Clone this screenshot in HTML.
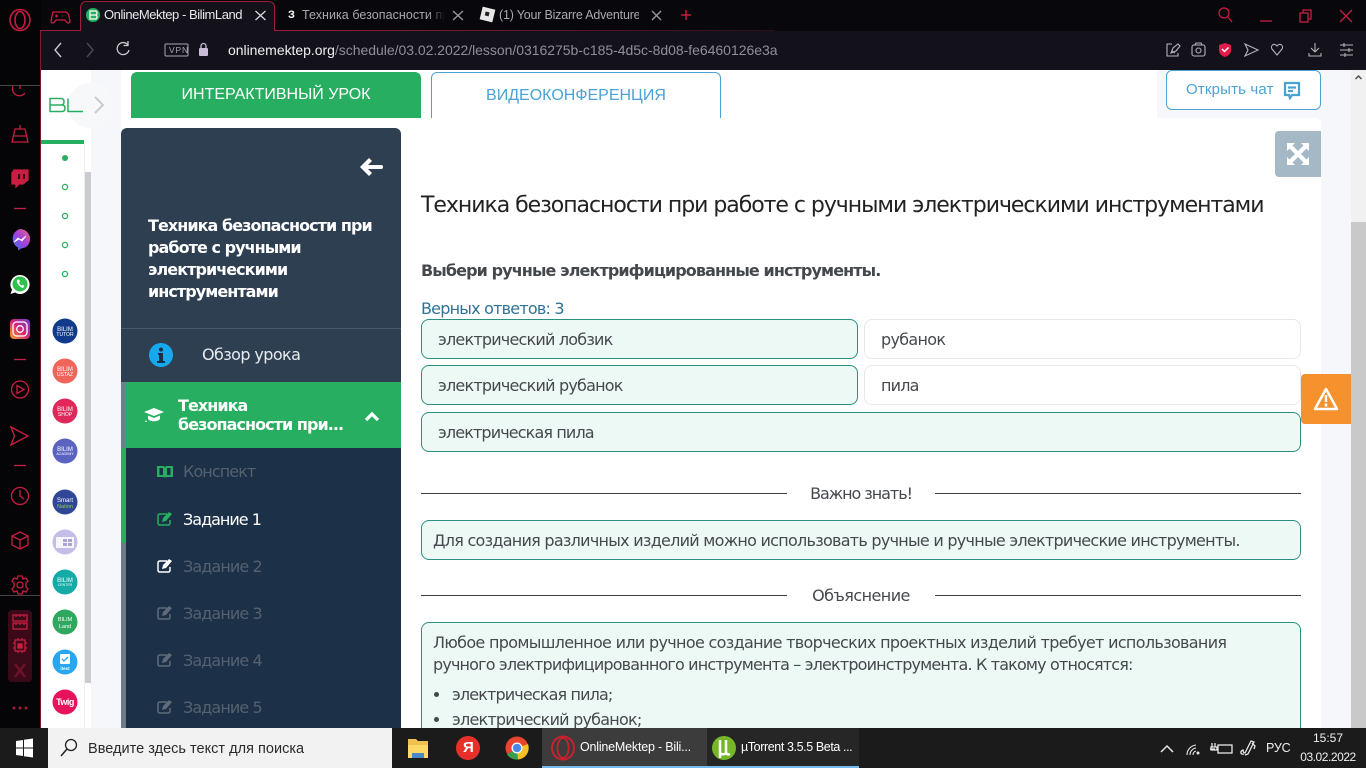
<!DOCTYPE html>
<html lang="ru"><head><meta charset="utf-8"><title>OnlineMektep - BilimLand</title>
<style>
html,body{margin:0;padding:0;width:1366px;height:768px;overflow:hidden;background:#fff}
body{position:relative;font-family:"DejaVu Sans","Liberation Sans",sans-serif;color:#45484d}
.a{position:absolute}
.t{position:absolute;white-space:nowrap;line-height:24px;height:24px;font-size:16px;letter-spacing:-.75px;color:#45484d}
.l{font-family:"Liberation Sans",sans-serif;letter-spacing:0}
.op{position:absolute;box-sizing:border-box;height:40px;border-radius:8px;border:1px solid #2b9080;background:#edf9f5}
.wo{border:1px solid #e6e8ea;background:#fff}
.ln{position:absolute;height:1px;background:#3c4043}
svg{position:absolute;overflow:visible}
</style></head><body>

<!-- browser chrome -->
<div class="a" style="left:0;top:0;width:1366px;height:31px;background:#08070c"></div>
<div class="a" style="left:41px;top:31px;width:1325px;height:39px;background:#13121a"></div>
<div class="a" style="left:0;top:0;width:41px;height:728px;background:#050508"></div>
<div class="a" style="left:40px;top:30px;width:1px;height:698px;background:#7d1a30"></div>
<div class="a" style="left:80px;top:1px;width:195px;height:30px;box-sizing:border-box;border:1px solid #a01d3c;border-bottom:0;border-radius:6px 6px 0 0;background:#13121a"></div>
<div class="a" style="left:275px;top:30px;width:500px;height:1px;background:linear-gradient(90deg,#a01d3c,#2a1018)"></div>
<div class="a" style="left:40px;top:30px;width:41px;height:1px;background:#a01d3c"></div>

<svg style="left:0;top:0" width="1366" height="70" fill="none" stroke="#c81e41" stroke-width="1.3">
 <ellipse cx="20" cy="20" rx="10" ry="10.5" stroke-width="1.5"/><ellipse cx="20" cy="20" rx="5" ry="8.5" stroke-width="1.5"/>
 <path d="M53 12h12q3 0 4 4l1 5q0 2-2 2-1 0-3-3h-9q-2 3-3 3-2 0-2-2l1-5q1-4 1-4z"/><path d="M55 16h3M56.500 14.500v3M62 16h1"/>
 <circle cx="93" cy="15" r="7" fill="#27ae60" stroke="none"/><path d="M90 11h5.500q1.500 0 1.500 2t-1.500 2H90zM90 15h5.500q1.500 0 1.500 2t-1.500 2H90z" stroke="#fff" stroke-width="1.200"/>
 <path d="M255.500 11l10 9M265.500 11l-10 9" stroke="#d8d8dc"/>
 <path d="M453 11l10 9M463 11l-10 9" stroke="#9a9aa0"/>
 <path d="M652 11l9 9M661 11l-9 9" stroke="#9a9aa0"/>
 <path d="M681 15h10M686 10v10" stroke="#d82345"/>
 <circle cx="1224" cy="13" r="5"/><path d="M1228 17l4 5"/>
 <path d="M1260 21h12" />
 <rect x="1300" y="13" width="8" height="9"/><path d="M1303 13v-3h8v9h-3"/>
 <path d="M1340 10l12 12M1352 10l-12 12"/>
 <g stroke="#c8c8cc" stroke-width="1.400"><path d="M61 43l-6 7 6 7"/></g>
 <path d="M87 43l6 7-6 7" stroke="#4a4a50" stroke-width="1.400"/>
 <path d="M128 45a6 6 0 1 0 1 5M128 41v4.500h-4.500" stroke="#c8c8cc" stroke-width="1.300"/>
 <rect x="165" y="44" width="23" height="12" rx="1" stroke="#a8a8ae" stroke-width="1"/>
 <rect x="199" y="48" width="9" height="8" rx="1" fill="#c8bcd8" stroke="none"/><path d="M201 48v-2a2.500 2.500 0 0 1 5 0v2" stroke="#c8bcd8"/>
 <g stroke="#b4b4ba" stroke-width="1.100">
 <path d="M1172 44h-5v12h11v-3M1171 53l2-5 5-4 2 2-4 5zM1172 51l3 2"/>
 <rect x="1192" y="45" width="13" height="11" rx="2"/><circle cx="1198.500" cy="50.500" r="2.500"/><path d="M1195 45l1-2h5l1 2"/>
 <path d="M1245 44l13 6-13 6 3-6z"/>
 <path d="M1277 46c-3-4-7 0-5 3l5 6 5-6c2-3-2-7-5-3z"/>
 <path d="M1315 43v9M1311 48l4 4 4-4M1309 53v3h12v-3"/>
 <path d="M1340 45h13M1340 50h13M1340 55h13M1344 43v4M1349 48v4M1345 53v4"/>
 </g>
 <path d="M1225 43l6 2v5c0 4-3 6-6 7-3-1-6-3-6-7v-5z" fill="#e8194b" stroke="none"/><path d="M1222 49l2.500 2.500 4-4" stroke="#fff" stroke-width="1.500"/>
</svg>
<div class="t l" style="left:104px;top:3px;font-size:13px;color:#e8e8ea;letter-spacing:-.45px">OnlineMektep - BilimLand</div>
<div class="a l" style="left:288px;top:9px;font:bold 11px 'Liberation Sans',sans-serif;color:#fff">З</div>
<div class="t l" style="left:302px;top:3px;width:143px;overflow:hidden;font-size:12.500px;color:#a8a8ae;letter-spacing:.05px;-webkit-mask-image:linear-gradient(90deg,#000 88%,transparent)">Техника безопасности при работе</div>
<div class="a" style="left:481px;top:8px;width:13px;height:13px;background:#e8e8e8;transform:rotate(14deg)"><div class="a" style="left:4px;top:4px;width:4px;height:4px;background:#222"></div></div>
<div class="t l" style="left:499px;top:3px;width:140px;overflow:hidden;font-size:12.500px;color:#a8a8ae;letter-spacing:-.2px">(1) Your Bizarre Adventure</div>
<div class="t l" style="left:169px;top:45px;height:10px;line-height:10px;font-size:8.500px;color:#a8a8ae;letter-spacing:.8px">VPN</div>
<div class="t l" style="left:228px;top:38px;font-size:14px;color:#8f8f96;letter-spacing:-.03px"><span style="color:#f0f0f2">onlinemektep.org</span>/schedule/03.02.2022/lesson/0316275b-c185-4d5c-8d08-fe6460126e3a</div>

<!-- opera sidebar icons -->
<svg style="left:0;top:70px" width="41" height="658" fill="none" stroke="#c81e41" stroke-width="1.300">
 <path d="M0 15.500h40" stroke="#4a4448" stroke-width="1"/>
 <path d="M13 16a7 7 0 0 0 12 7"/><path d="M20 15v4" />
 <path d="M20 55v4M15 59h10l3 13H12zM14 66h12"/>
 <path d="M14 100h14v10l-5 4h-4l-3 3v-3h-4v-11z" fill="#c81e41"/><path d="M19 104v5M24 104v5" stroke="#050508" stroke-width="1.500"/>
 <path d="M14 138.500h12" />
 <path d="M14 289.500h12"/>
 <circle cx="20" cy="319.500" r="8.500"/><path d="M17 315.500l7 4-7 4z"/>
 <path d="M11 357l17 9-17 9 3.500-9z"/>
 <path d="M14 395.500h12"/>
 <circle cx="20" cy="426" r="8.500"/><path d="M20 420v6l4 3"/>
 <path d="M20 462l8 4v9l-8 4-8-4v-9zM12 466l8 4 8-4M20 470v9"/>
 <circle cx="20" cy="515" r="3"/><path d="M18 506h4l1 3 3-1 2 3-2 2v4l2 2-2 3-3-1-1 3h-4l-1-3-3 1-2-3 2-2v-4l-2-2 2-3 3 1z"/>
 <path d="M0 525.500h40" stroke="#4a4448" stroke-width="1"/>
 <rect x="8" y="540" width="24" height="72" rx="4" fill="#3b0a19" stroke="none"/>
 <rect x="13" y="545" width="14" height="6"/><rect x="13" y="553" width="14" height="6"/><path d="M16 545v2M20 545v2M24 545v2M16 553v2M20 553v2M24 553v2"/>
 <rect x="15" y="570" width="10" height="11"/><rect x="18" y="574" width="4" height="4" fill="#c81e41"/><path d="M13 573h2M13 578h2M25 573h2M25 578h2M18 568v2M22 568v2M18 581v2M22 581v2"/>
 <path d="M15 594l10 13M25 594l-10 13" stroke="#6d1228" stroke-width="2.500"/>
 <circle cx="14" cy="638" r="1.500" fill="#a01d3c" stroke="none"/><circle cx="20" cy="638" r="1.500" fill="#a01d3c" stroke="none"/><circle cx="26" cy="638" r="1.500" fill="#a01d3c" stroke="none"/>
 <defs>
  <linearGradient id="ms" x1="0" y1="1" x2="1" y2="0"><stop offset="0" stop-color="#2e7bf0"/><stop offset=".5" stop-color="#a040e0"/><stop offset="1" stop-color="#f0607a"/></linearGradient>
  <linearGradient id="ig" x1="0" y1="1" x2="1" y2="0"><stop offset="0" stop-color="#f5a623"/><stop offset=".5" stop-color="#d6247a"/><stop offset="1" stop-color="#6a40d0"/></linearGradient>
 </defs>
 <path d="M20 159a10 10 0 0 1 6 18l-1 .500-4 1-3 2v-3a10 10 0 0 1 2-18.500z" fill="url(#ms)" stroke="none"/><path d="M14 172l4-4 3 2 5-4-4 5-3-2z" fill="#fff" stroke="#fff" stroke-width=".8"/>
 <path d="M20 205a9.500 9.500 0 1 1-5 17.500l-4.500 1.500 1.500-4.300A9.500 9.500 0 0 1 20 205z" fill="#fff" stroke="none"/><circle cx="20" cy="214" r="7.500" fill="#2ec04a" stroke="none"/><path d="M17 210c-1 2 2 7 6 8l1.500-2-2-1.300-1 .8c-1-.5-2-2-2.500-3l1-1-1-2z" fill="#fff" stroke="none"/>
 <rect x="10" y="249" width="20" height="20" rx="4" fill="url(#ig)" stroke="none"/><rect x="13" y="252" width="14" height="14" rx="3.500" stroke="#fff" stroke-width="1.300"/><circle cx="20" cy="259" r="3.300" stroke="#fff" stroke-width="1.300"/>
</svg>

<!-- page bg -->
<div class="a" style="left:91px;top:70px;width:30px;height:658px;background:#f5f7fb"></div>
<div class="a" style="left:1157px;top:70px;width:194px;height:658px;background:#f5f7fb"></div>
<div class="a" style="left:1351px;top:70px;width:15px;height:658px;background:#f1f1f1"></div>
<div class="a" style="left:1351px;top:222px;width:15px;height:506px;background:#c9c9c9"></div>
<svg style="left:1351px;top:70px" width="15" height="15" fill="none" stroke="#505050" stroke-width="1.500"><path d="M4.500 9l3-3 3 3"/></svg>

<!-- left BL panel -->
<div class="a" style="left:68px;top:83px;width:46px;height:45px;border-radius:23px;background:#f7f8fa"></div>
<svg style="left:41px;top:70px" width="80" height="70" fill="none" stroke="#27ae60" stroke-width="1.500">
 <path d="M9 28.500h11q3 0 3 3.200t-3 3.300H9zM9 35h12q3 0 3 3.200t-3 3.300H9zM27 28.500v13h15"/>
 <path d="M54 27l8 8-8 8" stroke="#c8ccd4" stroke-width="2"/>
</svg>
<div class="a" style="left:41px;top:140px;width:43px;height:4px;background:#27ae60"></div>
<div class="a" style="left:84px;top:144px;width:1px;height:584px;background:#eceef0"></div>
<div class="a" style="left:85px;top:172px;width:6px;height:511px;background:#c9cbd0"></div>
<svg style="left:41px;top:140px" width="50" height="590" fill="none" stroke="#27ae60" stroke-width="1.300" font-family="Liberation Sans, sans-serif">
 <circle cx="24" cy="18" r="3" fill="#27ae60" stroke="none"/>
 <circle cx="24" cy="47" r="2.600"/><circle cx="24" cy="76" r="2.600"/><circle cx="24" cy="105" r="2.600"/><circle cx="24" cy="134" r="2.600"/>
 <g stroke="none" text-anchor="middle" fill="#fff">
 <circle cx="24" cy="191" r="12.500" fill="#123a8c"/><text x="24" y="191" font-size="6">BILIM</text><text x="24" y="196" font-size="5">TUTOR</text>
 <circle cx="24" cy="231" r="12.500" fill="#f0645a"/><text x="24" y="231" font-size="6">BILIM</text><text x="24" y="236" font-size="5">USTAZ</text>
 <circle cx="24" cy="271" r="12.500" fill="#e0295a"/><text x="24" y="271" font-size="6">BILIM</text><text x="24" y="276" font-size="5">SHOP</text>
 <circle cx="24" cy="311" r="12.500" fill="#5a64c0"/><text x="24" y="311" font-size="6">BILIM</text><text x="24" y="315" font-size="3.500">ACADEMY</text>
 <circle cx="24" cy="362" r="12.500" fill="#2f4796"/><text x="24" y="362" font-size="6">Smart</text><text x="24" y="368" font-size="5.500" fill="#8fd04a">Nation</text>
 <circle cx="24" cy="402" r="12.500" fill="#c2bee8"/><rect x="15" y="397" width="18" height="11" fill="#fff" opacity=".85"/><rect x="22" y="399" width="4" height="3" fill="#a8a4d4"/><rect x="27" y="399" width="4" height="3" fill="#a8a4d4"/><rect x="22" y="403" width="4" height="3" fill="#a8a4d4"/><rect x="27" y="403" width="4" height="3" fill="#a8a4d4"/>
 <circle cx="24" cy="442" r="12.500" fill="#14aaa5"/><text x="24" y="442" font-size="6">BILIM</text><text x="24" y="446" font-size="3.500">CENTER</text>
 <circle cx="24" cy="482" r="12.500" fill="#2ea85f"/><text x="24" y="481" font-size="5.500">BILIM</text><text x="24" y="488" font-size="5.500">Land</text>
 <circle cx="24" cy="522" r="12.500" fill="#28a6f0"/><rect x="19" y="514" width="10" height="10" rx="1" fill="#fff"/><path d="M21 519l2 2 4-4" stroke="#28a6f0" stroke-width="1.300" fill="none"/><text x="24" y="530" font-size="4.500" font-weight="bold">itest</text>
 <circle cx="24" cy="562" r="12.500" fill="#e6125c"/><text x="24" y="565" font-size="9" font-weight="bold" letter-spacing="-.5">Twig</text>
 </g>
</svg>

<!-- top tabs -->
<div class="a" style="left:131px;top:72px;width:290px;height:46px;background:#27ae60;border-radius:6px 6px 0 0"></div>
<div class="t l" style="left:131px;width:290px;text-align:center;top:83px;font-size:16px;color:#fff">ИНТЕРАКТИВНЫЙ УРОК</div>
<div class="a" style="left:431px;top:72px;width:290px;height:46px;box-sizing:border-box;border:1px solid #4aa3d3;border-bottom:0;border-radius:6px 6px 0 0;background:#fff"></div>
<div class="t l" style="left:431px;width:290px;text-align:center;top:84px;font-size:16px;color:#4aa3d3">ВИДЕОКОНФЕРЕНЦИЯ</div>
<div class="a" style="left:1166px;top:70px;width:155px;height:40px;box-sizing:border-box;border:1px solid #4aa3d3;border-radius:6px;background:#fff"></div>
<div class="t l" style="left:1186px;top:78px;font-size:15px;color:#4aa3d3;letter-spacing:.17px">Открыть чат</div>
<svg style="left:1283px;top:81px" width="18" height="20" fill="none" stroke="#4aa3d3" stroke-width="2.300"><path d="M2 2h14v12H9l-2 3-1-3H2zM5 6.500h8M5 10h5"/></svg>

<!-- main card -->
<div class="a" style="left:121px;top:118px;width:1200px;height:610px;background:#fff;border-radius:6px 6px 0 0"></div>
<div class="a" style="left:1275px;top:131px;width:46px;height:46px;background:#a5b8c6;border-radius:4px 0 0 4px"></div>
<svg style="left:1286px;top:142px" width="24" height="24" fill="#fff"><path d="M1 1h8l-2.500 2.500L12 9l5.500-5.500L15 1h8v8l-2.500-2.500L15 12l5.500 5.500L23 15v8h-8l2.500-2.500L12 15l-5.500 5.500L9 23H1v-8l2.500 2.500L9 12 3.500 6.500 1 9z"/></svg>

<!-- dark sidebar -->
<div class="a" style="left:121px;top:128px;width:280px;height:254px;background:#2f3f52;border-radius:6px 6px 0 0"></div>
<div class="a" style="left:121px;top:328px;width:280px;height:1px;background:#4a5a6c"></div>
<div class="a" style="left:121px;top:382px;width:5px;height:66px;background:#6f7e8d"></div>
<div class="a" style="left:126px;top:382px;width:275px;height:66px;background:#27ae60"></div>
<div class="a" style="left:121px;top:448px;width:280px;height:280px;background:#1c3048"></div>
<div class="a" style="left:121px;top:448px;width:5px;height:95px;background:#27ae60"></div>
<div class="a" style="left:121px;top:543px;width:5px;height:185px;background:#6c7a89"></div>
<svg style="left:360px;top:157px" width="23" height="20" fill="#fff"><path d="M0 10l9-9 3 3-4 4h13q2 0 2 2t-2 2H8l4 4-3 3z"/></svg>
<div class="t" style="left:148px;top:215px;line-height:22px;height:22px;font-weight:bold;font-size:16px;color:#fff;letter-spacing:-.95px">Техника безопасности при</div>
<div class="t" style="left:148px;top:237px;line-height:22px;height:22px;font-weight:bold;font-size:16px;color:#fff;letter-spacing:-.95px">работе с ручными</div>
<div class="t" style="left:148px;top:259px;line-height:22px;height:22px;font-weight:bold;font-size:16px;color:#fff;letter-spacing:-.95px">электрическими</div>
<div class="t" style="left:148px;top:281px;line-height:22px;height:22px;font-weight:bold;font-size:16px;color:#fff;letter-spacing:-.95px">инструментами</div>
<svg style="left:149px;top:343px" width="24" height="24"><circle cx="12" cy="12" r="12" fill="#17a9ee"/><circle cx="12" cy="6.500" r="2" fill="#173045"/><path d="M9 10h5v8h2v2H8v-2h2v-6H9z" fill="#173045"/></svg>
<div class="t" style="left:202px;top:343px;color:#e8ebee;font-size:16px;letter-spacing:-.6px">Обзор урока</div>
<svg style="left:144px;top:407px" width="20" height="16" fill="#fff"><path d="M10 1L0 5l10 4 10-4zM4 8.500v3.500c2 3 10 3 12 0V8.500l-6 2.500z"/><path d="M2 6v7l-1 2h2l-1-2" /></svg>
<div class="t" style="left:178px;top:396px;line-height:19px;height:19px;font-weight:bold;font-size:16px;color:#fff;letter-spacing:-.95px">Техника</div>
<div class="t" style="left:178px;top:415px;line-height:19px;height:19px;font-weight:bold;font-size:16px;color:#fff;letter-spacing:-.95px">безопасности при...</div>
<svg style="left:364px;top:410px" width="16" height="12" fill="none" stroke="#fff" stroke-width="3.200"><path d="M2 10l6-6 6 6"/></svg>

<svg style="left:157px;top:464px" width="20" height="260">
 <path d="M0 2h6q2 0 2 2 0-2 2-2h6v11h-6q-2 0-2 1 0-1-2-1H0zM2.500 4v7h3.500V4zM10 4v7h3.500V4z" fill="#27ae60" fill-rule="evenodd"/>
 <g fill="none" stroke="#27ae60" stroke-width="1.500"><path d="M10 50H3q-2 0-2 2v7q0 2 2 2h8q2 0 2-2v-3"/></g><path d="M6 54l-1 4 4-1 6-7-3-2z" fill="#27ae60"/>
 <path d="M10 97H3q-2 0-2 2v7q0 2 2 2h8q2 0 2-2v-3" fill="none" stroke="#fff" stroke-width="1.500"/><path d="M6 101l-1 4 4-1 6-7-3-2z" fill="#fff"/>
 <g fill="none" stroke="#5f6b78" stroke-width="1.500"><path d="M10 144H3q-2 0-2 2v7q0 2 2 2h8q2 0 2-2v-3M10 191H3q-2 0-2 2v7q0 2 2 2h8q2 0 2-2v-3M10 238H3q-2 0-2 2v7q0 2 2 2h8q2 0 2-2v-3"/></g>
 <path d="M6 148l-1 4 4-1 6-7-3-2zM6 195l-1 4 4-1 6-7-3-2zM6 242l-1 4 4-1 6-7-3-2z" fill="#5f6b78"/>
</svg>
<div class="t" style="left:183px;top:460px;color:#55616f;letter-spacing:-.92px">Конспект</div>
<div class="t" style="left:183px;top:508px;color:#fff;letter-spacing:-1px">Задание 1</div>
<div class="t" style="left:183px;top:555px;color:#55616f;letter-spacing:-.9px">Задание 2</div>
<div class="t" style="left:183px;top:602px;color:#55616f;letter-spacing:-.9px">Задание 3</div>
<div class="t" style="left:183px;top:649px;color:#55616f;letter-spacing:-.9px">Задание 4</div>
<div class="t" style="left:183px;top:696px;color:#55616f;letter-spacing:-.9px">Задание 5</div>

<!-- content -->
<div class="t" style="left:421px;top:191px;height:30px;line-height:30px;font-size:22px;color:#222;letter-spacing:-1.04px">Техника безопасности при работе с ручными электрическими инструментами</div>
<div class="t" style="left:421px;top:259px;font-weight:bold;letter-spacing:-.9px;color:#44484d">Выбери ручные электрифицированные инструменты.</div>
<div class="t" style="left:421px;top:297px;color:#2f7396;letter-spacing:-.79px">Верных ответов: 3</div>

<div class="op" style="left:421px;top:319px;width:437px"></div>
<div class="t" style="left:438px;top:328px;letter-spacing:-.8px">электрический лобзик</div>
<div class="op wo" style="left:864px;top:319px;width:437px"></div>
<div class="t" style="left:881px;top:328px;letter-spacing:-.7px">рубанок</div>
<div class="op" style="left:421px;top:365px;width:437px"></div>
<div class="t" style="left:438px;top:374px;letter-spacing:-.79px">электрический рубанок</div>
<div class="op wo" style="left:864px;top:365px;width:437px"></div>
<div class="t" style="left:881px;top:374px;letter-spacing:-.8px">пила</div>
<div class="op" style="left:421px;top:412px;width:880px"></div>
<div class="t" style="left:438px;top:421px;letter-spacing:-.88px">электрическая пила</div>

<div class="a" style="left:1301px;top:374px;width:50px;height:50px;background:#f5922e;border-radius:4px 0 0 4px"></div>
<svg style="left:1313px;top:387px" width="26" height="24" fill="none" stroke="#fff" stroke-width="2.500"><path d="M13 2L2 22h22z" stroke-linejoin="round"/><path d="M13 8v7M13 16.500v3"/></svg>

<div class="ln" style="left:421px;top:493px;width:366px"></div>
<div class="ln" style="left:935px;top:493px;width:366px"></div>
<div class="t" style="left:787px;width:148px;text-align:center;top:482px;letter-spacing:-1.05px">Важно знать!</div>
<div class="op" style="left:421px;top:520px;width:880px"></div>
<div class="t" style="left:433px;top:529px;letter-spacing:-.735px">Для создания различных изделий можно использовать ручные и ручные электрические инструменты.</div>
<div class="ln" style="left:421px;top:595px;width:366px"></div>
<div class="ln" style="left:935px;top:595px;width:366px"></div>
<div class="t" style="left:787px;width:148px;text-align:center;top:584px;letter-spacing:-.55px">Объяснение</div>
<div class="op" style="left:421px;top:622px;width:880px;height:130px"></div>
<div class="t" style="left:433px;top:631px;letter-spacing:-.68px">Любое промышленное или ручное создание творческих проектных изделий требует использования</div>
<div class="t" style="left:433px;top:653px;letter-spacing:-.84px">ручного электрифицированного инструмента – электроинструмента. К такому относятся:</div>
<div class="a" style="left:434px;top:692px;width:5px;height:5px;border-radius:50%;background:#45484d"></div>
<div class="t" style="left:452px;top:683px;letter-spacing:-.87px">электрическая пила;</div>
<div class="a" style="left:434px;top:717px;width:5px;height:5px;border-radius:50%;background:#45484d"></div>
<div class="t" style="left:452px;top:708px;letter-spacing:-.78px">электрический рубанок;</div>

<!-- taskbar -->
<div class="a" style="left:0;top:728px;width:1366px;height:40px;background:#1b1b1b"></div>
<div class="a" style="left:48px;top:728px;width:344px;height:40px;background:#f2f2f2"></div>
<div class="a" style="left:542px;top:728px;width:165px;height:40px;background:#3c3c3c"></div>
<div class="a" style="left:542px;top:766px;width:165px;height:2px;background:#76b9ed"></div>
<div class="a" style="left:707px;top:728px;width:152px;height:40px;background:#262626"></div>
<div class="a" style="left:707px;top:766px;width:152px;height:2px;background:#76b9ed"></div>
<svg style="left:0;top:728px" width="900" height="40" fill="none">
 <path d="M16 13l7-1v7.500h-7zM24 11.800l9-1.300v9h-9zM16 20.500h7V28l-7-1zM24 20.500h9v9l-9-1.300z" fill="#fff"/>
 <circle cx="71" cy="17" r="5.500" stroke="#222" stroke-width="1.300"/><path d="M67 21l-6 7" stroke="#222" stroke-width="1.500"/>
 <path d="M408 11h8l2 2h10v17h-20z" fill="#f0c050"/><rect x="408" y="17" width="20" height="13" fill="#ffd966"/><rect x="412" y="25" width="12" height="5" fill="#4a88c8"/>
 <circle cx="468" cy="20" r="12" fill="#e8302a"/>
 <circle cx="517" cy="20" r="11.500" fill="#e8452f"/><path d="M517 20L507 26.500A11.500 11.500 0 0 0 518 31.500z" fill="#34a050"/><path d="M517 20l1 11.500a11.500 11.500 0 0 0 10-15.500z" fill="#f6c026"/><circle cx="517" cy="20" r="5.500" fill="#fff"/><circle cx="517" cy="20" r="4.200" fill="#4a88e8"/>
 <ellipse cx="563" cy="20" rx="11" ry="11.500" stroke="#c8202f" stroke-width="2"/><ellipse cx="563" cy="20" rx="5.500" ry="10" stroke="#c8202f" stroke-width="1.800"/>
 <circle cx="724" cy="20" r="12" fill="#76b72a"/><path d="M720 12v18M720 24c0 3 6 3 6 0V12M726 24c0 2 2 3 4 2" stroke="#fff" stroke-width="2.500"/>
</svg>
<div class="t l" style="left:463px;top:736px;font-weight:bold;font-size:15px;color:#fff">Я</div>
<div class="t" style="left:88px;top:737px;font-size:14.500px;color:#2a2a2a;font-family:'Liberation Sans',sans-serif;letter-spacing:.02px">Введите здесь текст для поиска</div>
<div class="t l" style="left:580px;top:735px;font-size:12.500px;color:#fff;letter-spacing:-.2px">OnlineMektep - Bili...</div>
<div class="t l" style="left:741px;top:735px;font-size:12.500px;color:#fff;letter-spacing:-.4px">µTorrent 3.5.5 Beta ...</div>
<svg style="left:1150px;top:728px" width="110" height="40" fill="none" stroke="#e8e8e8" stroke-width="1.300">
 <path d="M11 24l6-6 6 6" stroke-width="1.500"/>
 <path d="M37 27a10 10 0 0 1 9-10M40 27a7 7 0 0 1 6-7M43 27a4 4 0 0 1 3-4" stroke-width="1.100"/><circle cx="48" cy="25" r="1.500" fill="#e8e8e8" stroke="none"/>
 <rect x="68" y="17" width="14" height="8"/><path d="M60 21h5M62 15v4M65 15v4M61 19h6v3h-6z"/>
 <path d="M94 26c-4 1-4-3-1-4 0 3 2 3 2 3l6-12 3 1-6 12-3 1M102 15l3 3-1 3"/>
</svg>
<div class="t l" style="left:1266px;top:736px;font-size:12.500px;color:#f0f0f0;letter-spacing:-.2px">РУС</div>
<div class="t l" style="left:1300px;top:726px;width:56px;text-align:center;font-size:12px;color:#f0f0f0;line-height:24px">15:57</div>
<div class="t l" style="left:1300px;top:745px;width:56px;text-align:center;font-size:12px;color:#f0f0f0;letter-spacing:-.45px">03.02.2022</div>
</body></html>
